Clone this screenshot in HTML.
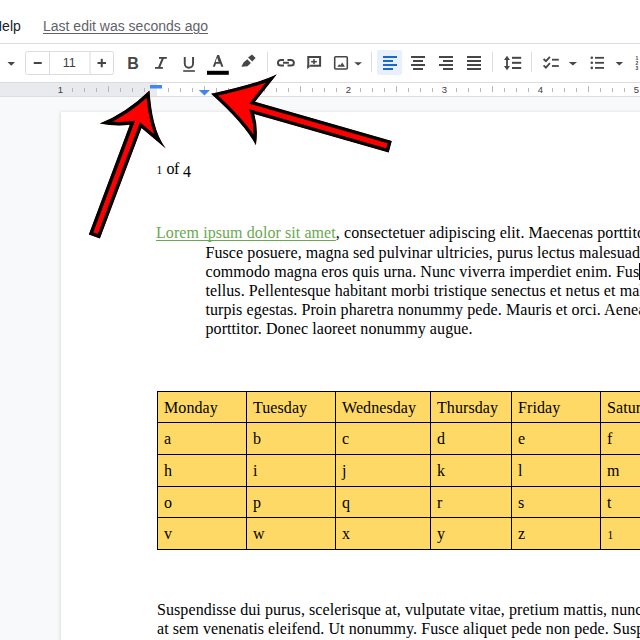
<!DOCTYPE html>
<html><head><meta charset="utf-8">
<style>
*{margin:0;padding:0;box-sizing:border-box}
html,body{width:640px;height:640px;overflow:hidden;background:#f8f9fa;position:relative}
body{font-family:"Liberation Sans",sans-serif}
.abs{position:absolute}
#top{left:0;top:0;width:640px;height:82px;background:#fff}
#sep{left:0;top:43px;width:640px;height:1px;background:#dadce0}
.menu{top:17px;font-size:14px;line-height:18px;color:#202124;white-space:nowrap}
#lastedit{left:43px;top:17px;font-size:14px;line-height:18px;color:#5f6368;white-space:nowrap;text-decoration:underline;text-underline-offset:1.5px}
#page{left:61px;top:112px;width:700px;height:600px;background:#fff;box-shadow:0 1px 3px 1px rgba(60,64,67,.15)}
.doc{position:absolute;font-family:"Liberation Serif",serif;font-size:16px;color:#000;white-space:nowrap;line-height:19px;letter-spacing:0.08px}
.link{color:#6aa84f;text-decoration:underline;text-decoration-color:#6aa84f;text-decoration-skip-ink:none;text-underline-offset:2px}
.tl{background:#000}
svg{position:absolute;left:0;top:0}
</style></head><body>
<div class="abs" id="top"></div>
<div class="abs" id="sep"></div>
<div class="abs menu" style="left:-8px">Help</div>
<div class="abs" id="lastedit">Last edit was seconds ago</div>

<svg width="640" height="100" viewBox="0 0 640 100">
 <!-- ruler -->
 <rect x="0" y="82" width="640" height="15" fill="#e8eaed"/>
 <rect x="157" y="83" width="483" height="13" fill="#fff"/>
 <rect x="0" y="82" width="640" height="1" fill="#dadce0"/>
 <rect x="0" y="96" width="640" height="1" fill="#dadce0"/>
 <g fill="#b4b8bc"><rect x="72.0" y="88" width="1" height="4"/><rect x="84.0" y="88" width="1" height="4"/><rect x="96.0" y="88" width="1" height="4"/><rect x="108.0" y="86" width="1" height="6"/><rect x="120.0" y="88" width="1" height="4"/><rect x="132.0" y="88" width="1" height="4"/><rect x="144.0" y="88" width="1" height="4"/><rect x="168.0" y="88" width="1" height="4"/><rect x="180.0" y="88" width="1" height="4"/><rect x="192.0" y="88" width="1" height="4"/><rect x="204.0" y="86" width="1" height="6"/><rect x="216.0" y="88" width="1" height="4"/><rect x="228.0" y="88" width="1" height="4"/><rect x="240.0" y="88" width="1" height="4"/><rect x="264.0" y="88" width="1" height="4"/><rect x="276.0" y="88" width="1" height="4"/><rect x="288.0" y="88" width="1" height="4"/><rect x="300.0" y="86" width="1" height="6"/><rect x="312.0" y="88" width="1" height="4"/><rect x="324.0" y="88" width="1" height="4"/><rect x="336.0" y="88" width="1" height="4"/><rect x="360.0" y="88" width="1" height="4"/><rect x="372.0" y="88" width="1" height="4"/><rect x="384.0" y="88" width="1" height="4"/><rect x="396.0" y="86" width="1" height="6"/><rect x="408.0" y="88" width="1" height="4"/><rect x="420.0" y="88" width="1" height="4"/><rect x="432.0" y="88" width="1" height="4"/><rect x="456.0" y="88" width="1" height="4"/><rect x="468.0" y="88" width="1" height="4"/><rect x="480.0" y="88" width="1" height="4"/><rect x="492.0" y="86" width="1" height="6"/><rect x="504.0" y="88" width="1" height="4"/><rect x="516.0" y="88" width="1" height="4"/><rect x="528.0" y="88" width="1" height="4"/><rect x="552.0" y="88" width="1" height="4"/><rect x="564.0" y="88" width="1" height="4"/><rect x="576.0" y="88" width="1" height="4"/><rect x="588.0" y="86" width="1" height="6"/><rect x="600.0" y="88" width="1" height="4"/><rect x="612.0" y="88" width="1" height="4"/><rect x="624.0" y="88" width="1" height="4"/></g>
 <g font-family="Liberation Sans" font-size="9.5" fill="#3c4043"><text x="60.5" y="92.5" text-anchor="middle">1</text><text x="252.5" y="92.5" text-anchor="middle">1</text><text x="348.5" y="92.5" text-anchor="middle">2</text><text x="444.5" y="92.5" text-anchor="middle">3</text><text x="540.5" y="92.5" text-anchor="middle">4</text><text x="636.5" y="92.5" text-anchor="middle">5</text></g>
 <rect x="150" y="85" width="12" height="3.5" fill="#4285f4"/>
 <polygon points="198.75,90 210,90 204.5,95.5" fill="#4285f4"/>

 <!-- toolbar -->
 <g fill="#444746">
  <polygon points="7.5,62 15,62 11.25,65.8"/>
 </g>
 <rect x="25.5" y="51.5" width="88" height="23" rx="2" fill="none" stroke="#dadce0" stroke-width="1"/>
 <rect x="49" y="51.5" width="1" height="23" fill="#dadce0"/>
 <rect x="89.5" y="51.5" width="1" height="23" fill="#dadce0"/>
 <g fill="#444746">
  <rect x="33.75" y="62" width="8" height="2"/>
  <rect x="97.5" y="62" width="8.5" height="2"/>
  <rect x="100.75" y="58.8" width="2" height="8.5"/>
 </g>
 <text x="69.25" y="67" font-family="Liberation Sans" font-size="12.5" text-anchor="middle" fill="#3c4043">11</text>
 <text x="133" y="68.75" font-family="Liberation Sans" font-weight="bold" font-size="16" text-anchor="middle" fill="#444746">B</text>
 <g fill="#444746">
  <!-- italic -->
  <rect x="159" y="57" width="7.8" height="1.8"/>
  <rect x="155" y="67" width="7.9" height="1.8"/>
  <polygon points="161.9,58 164.1,58 160.1,67.5 157.9,67.5"/>
  <!-- underline -->
  <path d="M183.8,57 h1.9 v6.6 a3.2,3.2 0 0 0 6.4,0 v-6.6 h1.9 v6.6 a5.1,5.1 0 0 1 -10.2,0 z"/>
  <rect x="183.2" y="70.2" width="11.7" height="1.6"/>
  <!-- text color A -->
  <path d="M217.2,55.1 h1.9 l4.3,11.7 h-2.1 l-1.1,-3.1 h-4.2 l-1.1,3.1 h-2.1 z M215.6,62 h3.0 l-1.5,-4.4 z"/>
 </g>
 <rect x="207" y="70.8" width="21.8" height="4" fill="#000"/>
 <g fill="#444746">
  <!-- highlighter -->
  <polygon points="248,57.4 252,54.4 255.6,58 252.3,61.4"/>
  <polygon points="247.3,59.2 250.9,62.9 247.5,66.2 241.4,66.8 243.5,62.4"/>
 </g>
 <rect x="267" y="52" width="1" height="20" fill="#dadce0"/>
 <g fill="none" stroke="#444746" stroke-width="2">
  <!-- link -->
  <path d="M284,59.9 h-3.2 a2.85,2.85 0 0 0 0,5.7 h3.2"/>
  <path d="M287.5,59.9 h3.5 a2.85,2.85 0 0 1 0,5.7 h-3.5"/>
  <path d="M283,62.75 h5.9"/>
  <!-- comment -->
  <path d="M308.3,67.5 v-10.6 h11.8 v8.8 h-10"/>
 </g>
 <g fill="#444746">
  <polygon points="307.3,69.4 307.3,65.5 310.5,65.5"/>
  <rect x="311.2" y="60.9" width="5.6" height="1.6"/>
  <rect x="313.2" y="59.2" width="1.6" height="5"/>
 </g>
 <!-- image -->
 <rect x="334.7" y="56.7" width="12.6" height="12.3" rx="1" fill="none" stroke="#444746" stroke-width="1.6"/>
 <polygon points="337.3,66.8 339.2,64.2 340.3,65.4 342.2,62.6 345,66.8" fill="#444746"/>
 <polygon points="354.25,62.2 362,62.2 358.1,65.5" fill="#444746"/>
 <rect x="371" y="52" width="1" height="20" fill="#dadce0"/>
 <!-- align -->
 <rect x="377" y="50" width="25" height="25" rx="2" fill="#e8f0fe"/>
 <g fill="#1967d2">
  <rect x="383" y="56" width="14" height="2"/><rect x="383" y="60" width="10" height="2"/>
  <rect x="383" y="64" width="14" height="2"/><rect x="383" y="68" width="10" height="2"/>
 </g>
 <g fill="#444746">
  <rect x="411" y="56" width="14" height="2"/><rect x="413" y="60" width="10" height="2"/>
  <rect x="411" y="64" width="14" height="2"/><rect x="413" y="68" width="10" height="2"/>
  <rect x="439" y="56" width="14" height="2"/><rect x="443" y="60" width="10" height="2"/>
  <rect x="439" y="64" width="14" height="2"/><rect x="443" y="68" width="10" height="2"/>
  <rect x="467" y="56" width="14" height="2"/><rect x="467" y="60" width="14" height="2"/>
  <rect x="467" y="64" width="14" height="2"/><rect x="467" y="68" width="14" height="2"/>
 </g>
 <rect x="492" y="52" width="1" height="20" fill="#dadce0"/>
 <g fill="#444746">
  <!-- line spacing -->
  <rect x="506.1" y="58" width="1.8" height="10"/>
  <polygon points="504,60 507,55.8 510,60"/>
  <polygon points="504,66 507,70.2 510,66"/>
  <rect x="512" y="56.8" width="9.2" height="2"/>
  <rect x="512" y="61.8" width="9.2" height="2"/>
  <rect x="512" y="67" width="9.2" height="2"/>
 </g>
 <rect x="531" y="52" width="1" height="20" fill="#dadce0"/>
 <g fill="none" stroke="#444746" stroke-width="1.8">
  <path d="M543.6,59 l2.3,2.2 l4,-4.4"/>
  <path d="M543.6,65.4 l2.3,2.2 l4,-4.4"/>
 </g>
 <g fill="#444746">
  <rect x="552" y="58.8" width="6.8" height="1.8"/>
  <rect x="552" y="65.1" width="6.8" height="1.8"/>
  <polygon points="568.75,62 577,62 572.9,65.6"/>
  <circle cx="591.8" cy="57.8" r="1.3"/><circle cx="591.8" cy="62.8" r="1.3"/><circle cx="591.8" cy="67.9" r="1.3"/>
  <rect x="595" y="56.9" width="9" height="1.8"/>
  <rect x="595" y="61.9" width="9" height="1.8"/>
  <rect x="595" y="67" width="9" height="1.8"/>
  <polygon points="615.6,62 623.1,62 619.35,65.6"/>
 </g>
 <g font-family="Liberation Sans" font-size="5" fill="#444746" font-weight="bold">
  <text x="635.5" y="60">1</text><text x="635.5" y="65">2</text><text x="635.5" y="70">3</text>
 </g>
</svg>

<div class="abs" id="page"></div>
<div class="doc" style="left:156.5px;top:161px;font-size:11.5px">1</div><div class="doc" style="left:166.5px;top:159px;letter-spacing:-0.6px">of</div><div class="doc" style="left:183px;top:162px">4</div>
<div class="doc" style="left:156px;top:223px"><span class="link">Lorem ipsum dolor sit amet</span>, consectetuer adipiscing elit. Maecenas porttitor congue massa.</div>
<div class="doc" style="left:205.5px;top:243px">Fusce posuere, magna sed pulvinar ultricies, purus lectus malesuada libero, sit amet</div>
<div class="doc" style="left:205.5px;top:262px">commodo magna eros quis urna. Nunc viverra imperdiet enim. Fusce est. Vivamus a</div>
<div class="doc" style="left:205.5px;top:281px">tellus. Pellentesque habitant morbi tristique senectus et netus et malesuada fames ac</div>
<div class="doc" style="left:205.5px;top:300px">turpis egestas. Proin pharetra nonummy pede. Mauris et orci. Aenean nec lorem. In</div>
<div class="doc" style="left:205.5px;top:319px">porttitor. Donec laoreet nonummy augue.</div>
<div class="abs" style="left:639px;top:263px;width:1px;height:17px;background:#000"></div>

<div class="abs" style="left:157px;top:391px;width:483px;height:159px;background:#ffd966"></div>
<div class="abs tl" style="left:157px;top:391px;width:483px;height:1px"></div>
<div class="abs tl" style="left:157px;top:422px;width:483px;height:1px"></div>
<div class="abs tl" style="left:157px;top:454px;width:483px;height:1px"></div>
<div class="abs tl" style="left:157px;top:486px;width:483px;height:1px"></div>
<div class="abs tl" style="left:157px;top:517px;width:483px;height:1px"></div>
<div class="abs tl" style="left:157px;top:549px;width:483px;height:1px"></div>
<div class="abs tl" style="left:157px;top:391px;width:1px;height:159px"></div>
<div class="abs tl" style="left:246px;top:391px;width:1px;height:159px"></div>
<div class="abs tl" style="left:335px;top:391px;width:1px;height:159px"></div>
<div class="abs tl" style="left:430px;top:391px;width:1px;height:159px"></div>
<div class="abs tl" style="left:511px;top:391px;width:1px;height:159px"></div>
<div class="abs tl" style="left:600px;top:391px;width:1px;height:159px"></div>
<div class="doc" style="left:164px;top:397.7px">Monday</div>
<div class="doc" style="left:253px;top:397.7px">Tuesday</div>
<div class="doc" style="left:342px;top:397.7px">Wednesday</div>
<div class="doc" style="left:437px;top:397.7px">Thursday</div>
<div class="doc" style="left:518px;top:397.7px">Friday</div>
<div class="doc" style="left:607px;top:397.7px">Saturday</div>
<div class="doc" style="left:164px;top:428.7px">a</div>
<div class="doc" style="left:253px;top:428.7px">b</div>
<div class="doc" style="left:342px;top:428.7px">c</div>
<div class="doc" style="left:437px;top:428.7px">d</div>
<div class="doc" style="left:518px;top:428.7px">e</div>
<div class="doc" style="left:607px;top:428.7px">f</div>
<div class="doc" style="left:164px;top:460.7px">h</div>
<div class="doc" style="left:253px;top:460.7px">i</div>
<div class="doc" style="left:342px;top:460.7px">j</div>
<div class="doc" style="left:437px;top:460.7px">k</div>
<div class="doc" style="left:518px;top:460.7px">l</div>
<div class="doc" style="left:607px;top:460.7px">m</div>
<div class="doc" style="left:164px;top:492.7px">o</div>
<div class="doc" style="left:253px;top:492.7px">p</div>
<div class="doc" style="left:342px;top:492.7px">q</div>
<div class="doc" style="left:437px;top:492.7px">r</div>
<div class="doc" style="left:518px;top:492.7px">s</div>
<div class="doc" style="left:607px;top:492.7px">t</div>
<div class="doc" style="left:164px;top:523.7px">v</div>
<div class="doc" style="left:253px;top:523.7px">w</div>
<div class="doc" style="left:342px;top:523.7px">x</div>
<div class="doc" style="left:437px;top:523.7px">y</div>
<div class="doc" style="left:518px;top:523.7px">z</div>
<div class="doc" style="left:607.5px;top:526px;font-size:11.5px">1</div>

<div class="doc" style="left:157px;top:600px">Suspendisse dui purus, scelerisque at, vulputate vitae, pretium mattis, nunc. Mauris eget neque</div>
<div class="doc" style="left:157px;top:619px">at sem venenatis eleifend. Ut nonummy. Fusce aliquet pede non pede. Suspendisse dapibus</div>

<svg width="640" height="640" viewBox="0 0 640 640">
 <defs>
  <clipPath id="c1"><path id="a1" d="M149.5,90.5 C151,113 155,134 165.8,148.5 L141.5,128 L99.9,238.4 L88.8,234.6 L129.8,124.8 Q115,126.5 99.7,123.5 Q126.1,113.2 149.5,90.5 Z"/></clipPath>
  <clipPath id="c2"><path id="a2" d="M211,93.8 Q260,83 276.9,74.25 L255,101.8 L391.8,141.1 L388.7,152.4 L254.2,114 Q258.5,128 255.9,145.25 Q244.4,123.5 211,93.8 Z"/></clipPath>
 </defs>
 <use href="#a1" fill="#f00" stroke="#000" stroke-width="7" clip-path="url(#c1)"/>
 <use href="#a2" fill="#f00" stroke="#000" stroke-width="6.8" clip-path="url(#c2)"/>
</svg>
</body></html>
